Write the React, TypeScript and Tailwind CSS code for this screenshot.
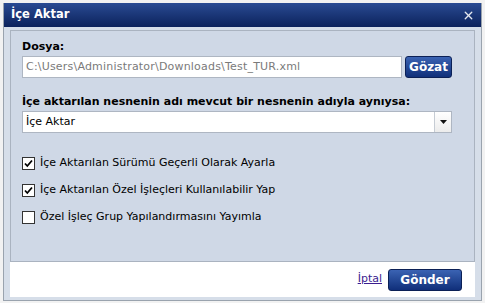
import { X } from "lucide-react";

const rows = [
  { label: "İçe Aktarılan Sürümü Geçerli Olarak Ayarla", checked: true },
  { label: "İçe Aktarılan Özel İşleçleri Kullanılabilir Yap", checked: true },
  { label: "Özel İşleç Grup Yapılandırmasını Yayımla", checked: false },
];

const Check = ({ checked }: { checked: boolean }) => (
  <span className="w-[13px] h-[13px] border border-[#333] bg-white flex items-center justify-center">
    {checked && (
      <svg width="9" height="9" viewBox="0 0 9 9">
        <path d="M1 4.5 L3.3 7 L8 1.5" fill="none" stroke="#000" strokeWidth="1.8" />
      </svg>
    )}
  </span>
);

export default function App() {
  return (
    <div className="w-[485px] h-[303px] bg-[#f2f2f2] pt-[3px] pl-[3px] pr-[3px] font-['DejaVu_Sans',Verdana,sans-serif] text-[11px] text-black">
      <div className="w-[479px] h-[298px] border border-[#9aa3ae] border-t-0 bg-[#d6dee9] flex flex-col">
        {/* Title */}
        <div className="h-[24px] bg-gradient-to-b from-[#2a4b93] to-[#0c225c] flex items-center justify-between pl-[7px] pr-[6px] text-white">
          <span className="font-bold text-[11.5px]">İçe Aktar</span>
          <X size={13} strokeWidth={2.5} className="text-[#e6e9f0]" />
        </div>

        <div className="flex-1 px-[6px] pt-[3px] pb-[3px] flex flex-col">
          {/* Panel */}
          <div className="h-[232px] border border-[#aab3c0] bg-[#cfd8e6] px-[11px] pt-[9px]">
            <div className="font-bold leading-[14px]">Dosya:</div>
            <div className="flex gap-[3px] mt-[2px]">
              <div className="w-[380px] h-[22px] border border-[#aeb6c2] bg-white flex items-center px-[3px] text-[#7a7a7a] tracking-[0.2px]">
                C:\Users\Administrator\Downloads\Test_TUR.xml
              </div>
              <button className="w-[47px] h-[22px] rounded-[3px] border border-[#0b2056] bg-gradient-to-b from-[#3b63b3] to-[#102f7a] text-white font-bold text-[12px] leading-none">
                Gözat
              </button>
            </div>

            <div className="font-bold leading-[14px] mt-[17px]">İçe aktarılan nesnenin adı mevcut bir nesnenin adıyla aynıysa:</div>
            <div className="w-[430px] h-[22px] mt-[2px] border border-[#aeb6c2] bg-white flex">
              <div className="flex-1 flex items-center px-[3px]">İçe Aktar</div>
              <div className="w-[17px] border-l border-[#c6ccd4] bg-gradient-to-b from-white to-[#ececec] flex items-center justify-center">
                <svg width="7" height="4" viewBox="0 0 7 4">
                  <path d="M0 0 H7 L3.5 4 Z" fill="#111" />
                </svg>
              </div>
            </div>

            <div className="flex flex-col gap-[14px] mt-[24px]">
              {rows.map((r) => (
                <label key={r.label} className="flex items-center gap-[5px] h-[13px]">
                  <Check checked={r.checked} />
                  <span>{r.label}</span>
                </label>
              ))}
            </div>
          </div>

          {/* Footer */}
          <div className="flex-1 bg-white flex items-center justify-end gap-[6px] pr-[13px]">
            <a href="#" className="underline text-[#3b1d8f]">İptal</a>
            <button className="w-[74px] h-[22px] rounded-[3px] border border-[#0b2056] bg-gradient-to-b from-[#3b63b3] to-[#102f7a] text-white font-bold text-[12px] leading-none">
              Gönder
            </button>
          </div>
        </div>
      </div>
    </div>
  );
}
